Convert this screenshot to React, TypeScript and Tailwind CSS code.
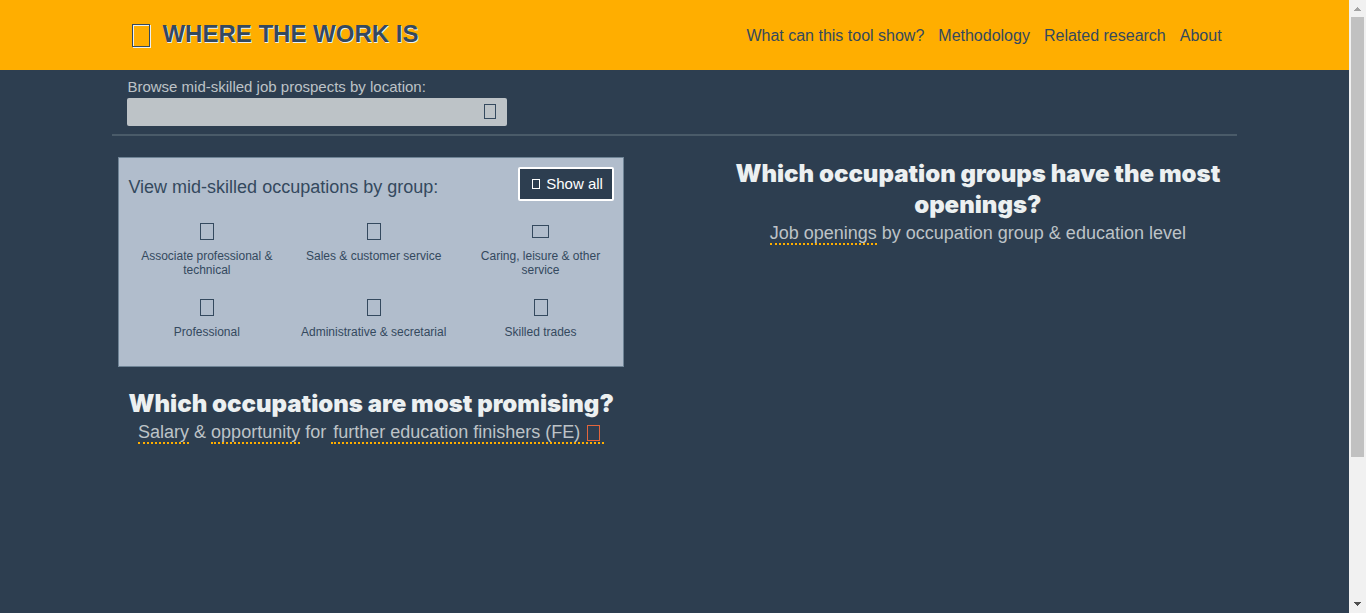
import type { ReactNode } from "react";

function Glyph({ className }: { className: string }) {
  return <span aria-hidden="true" className={`inline-block border ${className}`} />;
}

const navLinks = ["What can this tool show?", "Methodology", "Related research", "About"];

const groups = [
  { label: "Associate professional & technical", icon: "h-[17px] w-3.5" },
  { label: "Sales & customer service", icon: "h-[17px] w-3.5" },
  { label: "Caring, leisure & other service", icon: "h-[13px] w-[17px]" },
  { label: "Professional", icon: "h-[17px] w-3.5" },
  { label: "Administrative & secretarial", icon: "h-[17px] w-3.5" },
  { label: "Skilled trades", icon: "h-[17px] w-3.5" },
];

function Term({ children }: { children: ReactNode }) {
  return (
    <a href="#" className="border-b-2 border-dotted border-[#ffae00]">
      {children}
    </a>
  );
}

function ChartHeading({ title, children }: { title: string; children: ReactNode }) {
  return (
    <section className="pt-px text-center">
      <h2 className="font-['Inter',sans-serif] text-2xl leading-[31px] font-black text-[#ecf0f1]">{title}</h2>
      <p className="text-lg leading-[26px]">{children}</p>
    </section>
  );
}

function Header() {
  return (
    <header className="bg-[#ffae00] text-[#34495e]">
      <div className="mx-auto flex h-[70px] w-10/12 items-center justify-between pr-[15px] pl-5">
        <h1 className="flex items-center gap-3 text-2xl font-bold text-shadow-[1px_1px_0_#ecf0f1]">
          <Glyph className="h-[23px] w-[18px] border-[#34495e] shadow-[1px_1px_0_#ecf0f1,inset_1px_1px_0_#ecf0f1]" />
          <span className="pb-0.5">WHERE THE WORK IS</span>
        </h1>
        <nav className="flex gap-3.5 pt-0.5 text-base">
          {navLinks.map((label) => (
            <a key={label} href="#">
              {label}
            </a>
          ))}
        </nav>
      </div>
    </header>
  );
}

function LocationSearch() {
  return (
    <form className="border-b-2 border-[#4a5b69] px-[15px] pt-1.5 pb-2">
      <label htmlFor="location" className="block text-[15px] leading-[22px]">
        Browse mid-skilled job prospects by location:
      </label>
      <div className="flex h-7 w-[380px] max-w-full items-center rounded-xs bg-[#bdc3c7] pr-[11px]">
        <input id="location" type="text" className="h-full min-w-0 flex-1 px-2 text-sm text-[#34495e] outline-none" />
        <button type="submit" aria-label="Search" className="flex pb-0.5">
          <Glyph className="h-[15px] w-3 border-[#34495e]" />
        </button>
      </div>
    </form>
  );
}

function GroupPicker() {
  return (
    <section className="border border-[#6f8496] bg-[#b1bdcc] px-[9px] pt-[9px] pb-[27px] text-[#34495e]">
      <div className="flex items-start justify-between">
        <h2 className="pt-1.5 text-lg leading-7">View mid-skilled occupations by group:</h2>
        <button
          type="button"
          className="flex h-[34px] items-center gap-1.5 rounded-xs border-2 border-white bg-[#2d3e50] pr-[9px] pl-3 text-[15px] text-white"
        >
          <Glyph className="h-2.5 w-2 border-white" />
          Show all
        </button>
      </div>
      <ul className="-mr-2.5 -ml-[5px] mt-[21px] grid grid-cols-3 gap-y-[21px] text-center text-xs leading-3.5">
        {groups.map(({ label, icon }) => (
          <li key={label}>
            <a href="#" className="flex flex-col items-center gap-2 px-1">
              <span className="flex h-[19px] items-center">
                <Glyph className={`border-[#34495e] ${icon}`} />
              </span>
              <span className="max-w-[150px]">{label}</span>
            </a>
          </li>
        ))}
      </ul>
    </section>
  );
}

function ScrollRail() {
  return (
    <div aria-hidden="true" className="sticky top-0 flex h-screen w-[17px] shrink-0 flex-col items-center justify-between bg-[#f1f1f1]">
      <svg viewBox="0 0 17 17" className="size-[17px] shrink-0" shapeRendering="crispEdges">
        <path d="M5 11h7v-1h-1V9h-1V8H9V7H8v1H7v1H6v1H5z" fill="#a3a3a3" />
      </svg>
      <div className="flex w-[13px] flex-1">
        <div className="h-[76%] w-full bg-[#c1c1c1]" />
      </div>
      <svg viewBox="0 0 17 17" className="size-[17px] shrink-0" shapeRendering="crispEdges">
        <path d="M5 6h7v1h-1v1h-1v1H9v1H8V9H7V8H6V7H5z" fill="#505050" />
      </svg>
    </div>
  );
}

export default function App() {
  return (
    <div className="flex min-h-screen bg-[#2d3e50] font-['Liberation_Sans',Arial,sans-serif] text-[#bdc3c7]">
      <div className="min-w-0 flex-1">
        <Header />
        <main className="mx-auto w-10/12">
          <LocationSearch />
          <div className="flex items-start justify-between px-1.5 pt-[21px]">
            <div className="flex w-5/11 flex-col gap-5">
              <GroupPicker />
              <ChartHeading title="Which occupations are most promising?">
                <Term>Salary</Term> &amp; <Term>opportunity</Term> for{" "}
                <Term>
                  <span className="pl-0.5">further education finishers (FE)</span>{" "}
                  <Glyph className="mr-1 ml-0.5 h-4 w-[13px] border-[#e2653c] align-[-3px]" />
                </Term>
              </ChartHeading>
            </div>
            <div className="w-5/11">
              <ChartHeading title="Which occupation groups have the most openings?">
                <Term>Job openings</Term> by occupation group &amp; education level
              </ChartHeading>
            </div>
          </div>
        </main>
      </div>
      <ScrollRail />
    </div>
  );
}
